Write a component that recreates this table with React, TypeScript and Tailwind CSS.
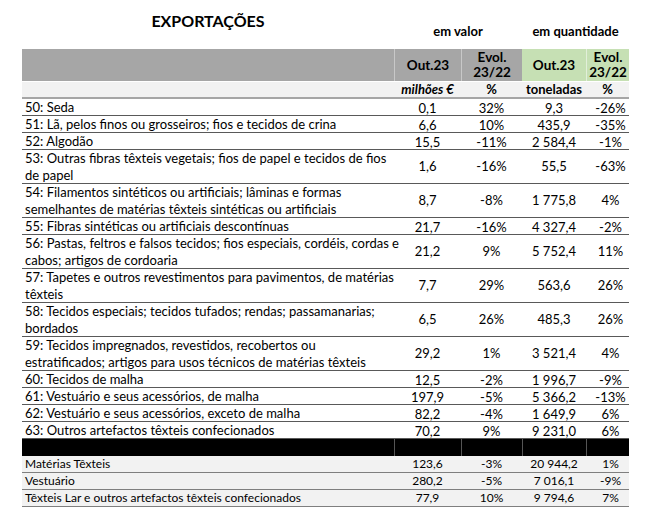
import React from "react";

type Row = {
  label: string[];
  valor: string;
  evolValor: string;
  qtd: string;
  evolQtd: string;
};

const rows: Row[] = [
  { label: ["50: Seda"], valor: "0,1", evolValor: "32%", qtd: "9,3", evolQtd: "-26%" },
  { label: ["51: Lã, pelos finos ou grosseiros; fios e tecidos de crina"], valor: "6,6", evolValor: "10%", qtd: "435,9", evolQtd: "-35%" },
  { label: ["52: Algodão"], valor: "15,5", evolValor: "-11%", qtd: "2 584,4", evolQtd: "-1%" },
  { label: ["53: Outras fibras têxteis vegetais; fios de papel e tecidos de fios", "de papel"], valor: "1,6", evolValor: "-16%", qtd: "55,5", evolQtd: "-63%" },
  { label: ["54: Filamentos sintéticos ou artificiais; lâminas e formas", "semelhantes de matérias têxteis sintéticas ou artificiais"], valor: "8,7", evolValor: "-8%", qtd: "1 775,8", evolQtd: "4%" },
  { label: ["55: Fibras sintéticas ou artificiais descontínuas"], valor: "21,7", evolValor: "-16%", qtd: "4 327,4", evolQtd: "-2%" },
  { label: ["56: Pastas, feltros e falsos tecidos; fios especiais, cordéis, cordas e", "cabos; artigos de cordoaria"], valor: "21,2", evolValor: "9%", qtd: "5 752,4", evolQtd: "11%" },
  { label: ["57: Tapetes e outros revestimentos para pavimentos, de matérias", "têxteis"], valor: "7,7", evolValor: "29%", qtd: "563,6", evolQtd: "26%" },
  { label: ["58: Tecidos especiais; tecidos tufados; rendas; passamanarias;", "bordados"], valor: "6,5", evolValor: "26%", qtd: "485,3", evolQtd: "26%" },
  { label: ["59: Tecidos impregnados, revestidos, recobertos ou", "estratificados; artigos para usos técnicos de matérias têxteis"], valor: "29,2", evolValor: "1%", qtd: "3 521,4", evolQtd: "4%" },
  { label: ["60: Tecidos de malha"], valor: "12,5", evolValor: "-2%", qtd: "1 996,7", evolQtd: "-9%" },
  { label: ["61: Vestuário e seus acessórios, de malha"], valor: "197,9", evolValor: "-5%", qtd: "5 366,2", evolQtd: "-13%" },
  { label: ["62: Vestuário e seus acessórios, exceto de malha"], valor: "82,2", evolValor: "-4%", qtd: "1 649,9", evolQtd: "6%" },
  { label: ["63: Outros artefactos têxteis confecionados"], valor: "70,2", evolValor: "9%", qtd: "9 231,0", evolQtd: "6%" },
];

const totals: Row[] = [
  { label: ["Matérias Têxteis"], valor: "123,6", evolValor: "-3%", qtd: "20 944,2", evolQtd: "1%" },
  { label: ["Vestuário"], valor: "280,2", evolValor: "-5%", qtd: "7 016,1", evolQtd: "-9%" },
  { label: ["Têxteis Lar e outros artefactos têxteis confecionados"], valor: "77,9", evolValor: "10%", qtd: "9 794,6", evolQtd: "7%" },
];

const cols = "grid grid-cols-[372px_67px_61px_64px_43px]";

const App = () => {
  return (
    <div className="w-[646px] h-[525px] bg-white text-black font-['Lato',sans-serif]">
      <div className="ml-[22px] w-[607px]">
        {/* Titulo */}
        <div className={`${cols} h-[49px]`}>
          <div className="pt-[11px] text-center text-[16px] font-bold leading-[20px]">
            EXPORTAÇÕES
          </div>
          <div className="col-span-2 pt-[23px] text-center text-[13px] font-bold leading-[17px]">
            em valor
          </div>
          <div className="col-span-2 pt-[23px] text-center text-[13px] font-bold leading-[17px]">
            em quantidade
          </div>
        </div>

        {/* Cabeçalho */}
        <div className={`${cols} h-[33px] border-b border-white text-[13.5px] font-bold leading-[15px]`}>
          <div className="bg-[#a6a6a6]" />
          <div className="flex items-center justify-center bg-[#a6a6a6] border-l border-[#c8c8c8]">
            Out.23
          </div>
          <div className="flex items-center justify-center text-center bg-[#a6a6a6] border-l border-[#c8c8c8]">
            Evol.
            <br />
            23/22
          </div>
          <div className="flex items-center justify-center bg-[#c6e0b4]">Out.23</div>
          <div className="flex items-center justify-center text-center bg-[#c6e0b4] border-l border-[#e2efd9]">
            Evol.
            <br />
            23/22
          </div>
        </div>
        <div className={`${cols} h-[17px] bg-[#f2f2f2] border-b-2 border-[#a6a6a6] text-[13px] font-bold leading-[15px]`}>
          <div />
          <div className="text-center italic">milhões €</div>
          <div className="text-center">%</div>
          <div className="text-center">toneladas</div>
          <div className="text-center">%</div>
        </div>

        {/* Linhas */}
        {rows.map((r) => (
          <div
            key={r.label[0]}
            className={`${cols} ${r.label.length > 1 ? "h-[34px]" : "h-[17px]"} border-b border-[#595959] text-[13px]`}
          >
            <div className="pl-[3px] leading-[16.5px] whitespace-nowrap">
              {r.label.map((l) => (
                <div key={l}>{l}</div>
              ))}
            </div>
            <div className="flex items-center justify-center">{r.valor}</div>
            <div className="flex items-center justify-center">{r.evolValor}</div>
            <div className="flex items-center justify-center">{r.qtd}</div>
            <div className="flex items-center justify-center pl-[6px]">{r.evolQtd}</div>
          </div>
        ))}

        {/* Barra preta */}
        <div className={`${cols} h-[17px] bg-black`}>
          <div />
          <div className="border-l border-[#555]" />
          <div className="border-l border-[#555]" />
          <div className="border-l border-[#555]" />
          <div className="border-l border-[#555]" />
        </div>

        {/* Totais */}
        {totals.map((r) => (
          <div
            key={r.label[0]}
            className={`${cols} h-[17px] bg-[#f2f2f2] border-b border-[#7f7f7f] text-[12px] leading-[16px]`}
          >
            <div className="pl-[3px] whitespace-nowrap">{r.label[0]}</div>
            <div className="flex items-center justify-center">{r.valor}</div>
            <div className="flex items-center justify-center">{r.evolValor}</div>
            <div className="flex items-center justify-center">{r.qtd}</div>
            <div className="flex items-center justify-center pl-[6px]">{r.evolQtd}</div>
          </div>
        ))}
      </div>
    </div>
  );
};

export default App;
